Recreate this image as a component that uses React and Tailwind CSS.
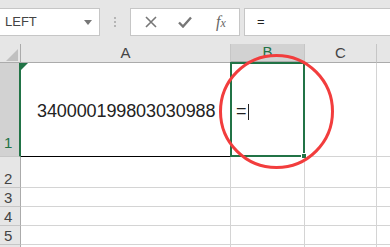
import React from 'react';

const font = { fontFamily: '"Liberation Sans", Arial, sans-serif' };

const Toolbar = () => (
  <div className="h-[44px] bg-[#e6e6e6] flex items-start pt-[8px]">
    {/* name box */}
    <div className="w-[100px] h-[28px] bg-white border border-[#c6c6c6] border-l-0 flex items-center justify-between pl-[5px] pr-[7px]">
      <span className="text-[13px] text-[#444]">LEFT</span>
      <svg width="8" height="5" viewBox="0 0 8 5"><path d="M0 0h8L4 5z" fill="#777" /></svg>
    </div>
    <div className="w-[30px] h-[28px] flex flex-col items-center justify-center gap-[2px]">
      <span className="w-[2px] h-[2px] bg-[#b5b5b5]" />
      <span className="w-[2px] h-[2px] bg-[#b5b5b5]" />
      <span className="w-[2px] h-[2px] bg-[#b5b5b5]" />
    </div>
    {/* cancel / enter / fx */}
    <div className="w-[110px] h-[28px] bg-white border border-[#c6c6c6] flex items-center">
      <div className="w-[36px] flex justify-center pl-[4px]">
        <svg width="12" height="12" viewBox="0 0 12 12"><path d="M1 1l10 10M11 1L1 11" stroke="#777" strokeWidth="1.6" /></svg>
      </div>
      <div className="w-[36px] flex justify-center">
        <svg width="14" height="12" viewBox="0 0 14 12"><path d="M1 6.5l4 4L13 1.5" stroke="#777" strokeWidth="2.4" fill="none" /></svg>
      </div>
      <div className="w-[36px] flex justify-center">
        <span className="text-[16px] italic text-[#666]" style={{ fontFamily: '"Liberation Serif", serif' }}>f<span className="text-[12px]">x</span></span>
      </div>
    </div>
    <div className="ml-[4px] flex-1 h-[28px] bg-white border border-[#c6c6c6] border-r-0 flex items-center pl-[12px]">
      <span className="text-[13px] text-[#222]">=</span>
    </div>
  </div>
);

const colHead = 'h-[19px] flex items-center justify-center text-[15px] text-[#444] border-r border-[#c6c6c6] border-b border-b-[#ababab]';

export default function App() {
  return (
    <div className="w-[390px] h-[247px] bg-white overflow-hidden relative" style={font}>
      <Toolbar />
      <div className="grid grid-cols-[21px_210px_74px_72px_13px] grid-rows-[19px_94px_31px_19px_19px_19px_19px]">
        {/* header row */}
        <div className="bg-[#e6e6e6] border-r border-[#ababab] border-b border-b-[#ababab] relative">
          <svg className="absolute left-[6px] top-[5px]" width="12" height="12" viewBox="0 0 12 12"><path d="M12 0V12H0z" fill="#c0c0c0" /></svg>
        </div>
        <div className={`${colHead} bg-[#e6e6e6]`}>A</div>
        <div className={`${colHead} bg-[#d2d2d2] text-[#217346] border-b-2 border-b-[#217346]`}>B</div>
        <div className={`${colHead} bg-[#e6e6e6]`}>C</div>
        <div className="bg-[#e6e6e6] border-b border-b-[#ababab]" />

        {/* row 1 */}
        <div className="bg-[#d2d2d2] border-r-2 border-[#217346] border-b border-b-[#c6c6c6] flex items-end pl-[4px] pb-[2px] text-[15px] text-[#217346]">1</div>
        <div className="border-r border-[#d4d4d4] border-b border-b-black relative flex items-center pl-[16px] pt-[4px]">
          <svg className="absolute left-0 top-0" width="7" height="7" viewBox="0 0 7 7"><path d="M0 0h7L0 7z" fill="#217346" /></svg>
          <span className="text-[18px] text-[#222] tracking-[-0.1px]">340000199803030988</span>
        </div>
        <div className="border-r border-[#d4d4d4] border-b border-b-[#d4d4d4] relative flex items-center pl-[5px] pt-[4px]">
          <div className="absolute -left-[1px] -top-[1px] -right-[1px] -bottom-[1px] border-2 border-[#217346]" />
          <div className="absolute -right-[3px] -bottom-[3px] w-[6px] h-[6px] bg-[#217346] border border-white" />
          <span className="text-[18px] text-[#222]">=</span>
          <span className="w-[1px] h-[16px] bg-[#222] ml-[1px]" />
        </div>
        <div className="border-r border-[#d4d4d4] border-b border-b-[#d4d4d4]" />
        <div className="border-b border-b-[#d4d4d4]" />

        {['2', '3', '4', '5', ''].map((n, i) => (
          <React.Fragment key={i}>
            <div className="bg-[#e6e6e6] border-r border-[#ababab] border-b border-b-[#c6c6c6] flex items-end pl-[4px] text-[15px] leading-[17px] text-[#444]">{n}</div>
            <div className="border-r border-[#d4d4d4] border-b border-b-[#d4d4d4]" />
            <div className="border-r border-[#d4d4d4] border-b border-b-[#d4d4d4]" />
            <div className="border-r border-[#d4d4d4] border-b border-b-[#d4d4d4]" />
            <div className="border-b border-b-[#d4d4d4]" />
          </React.Fragment>
        ))}
      </div>

      {/* red annotation circle */}
      <div className="absolute left-[219px] top-[54px] w-[115px] h-[115px] rounded-full border-[3px] border-[#f23d3d] pointer-events-none" />
    </div>
  );
}
